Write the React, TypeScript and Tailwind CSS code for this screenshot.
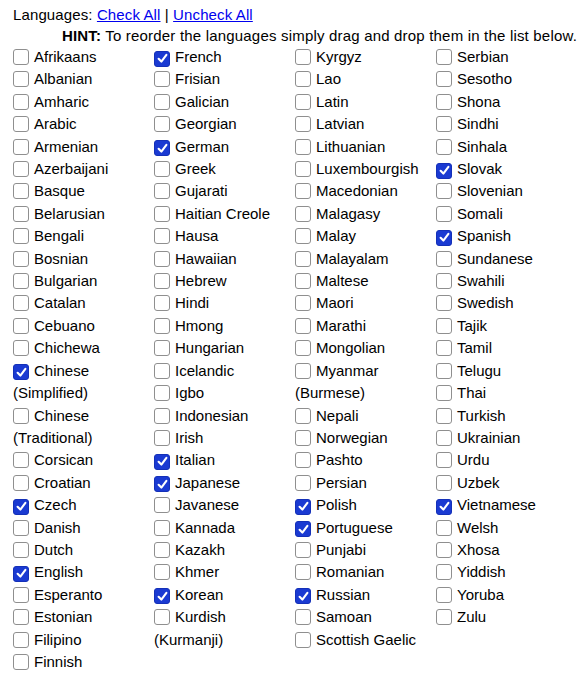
import React from 'react';

type Lang = { name: string; on?: boolean };

const columns: Lang[][] = [
  [
    { name: 'Afrikaans' }, { name: 'Albanian' }, { name: 'Amharic' }, { name: 'Arabic' },
    { name: 'Armenian' }, { name: 'Azerbaijani' }, { name: 'Basque' }, { name: 'Belarusian' },
    { name: 'Bengali' }, { name: 'Bosnian' }, { name: 'Bulgarian' }, { name: 'Catalan' },
    { name: 'Cebuano' }, { name: 'Chichewa' }, { name: 'Chinese (Simplified)', on: true },
    { name: 'Chinese (Traditional)' }, { name: 'Corsican' }, { name: 'Croatian' },
    { name: 'Czech', on: true }, { name: 'Danish' }, { name: 'Dutch' }, { name: 'English', on: true },
    { name: 'Esperanto' }, { name: 'Estonian' }, { name: 'Filipino' }, { name: 'Finnish' },
  ],
  [
    { name: 'French', on: true }, { name: 'Frisian' }, { name: 'Galician' }, { name: 'Georgian' },
    { name: 'German', on: true }, { name: 'Greek' }, { name: 'Gujarati' }, { name: 'Haitian Creole' },
    { name: 'Hausa' }, { name: 'Hawaiian' }, { name: 'Hebrew' }, { name: 'Hindi' },
    { name: 'Hmong' }, { name: 'Hungarian' }, { name: 'Icelandic' }, { name: 'Igbo' },
    { name: 'Indonesian' }, { name: 'Irish' }, { name: 'Italian', on: true }, { name: 'Japanese', on: true },
    { name: 'Javanese' }, { name: 'Kannada' }, { name: 'Kazakh' }, { name: 'Khmer' },
    { name: 'Korean', on: true }, { name: 'Kurdish (Kurmanji)' },
  ],
  [
    { name: 'Kyrgyz' }, { name: 'Lao' }, { name: 'Latin' }, { name: 'Latvian' },
    { name: 'Lithuanian' }, { name: 'Luxembourgish' }, { name: 'Macedonian' }, { name: 'Malagasy' },
    { name: 'Malay' }, { name: 'Malayalam' }, { name: 'Maltese' }, { name: 'Maori' },
    { name: 'Marathi' }, { name: 'Mongolian' }, { name: 'Myanmar (Burmese)' }, { name: 'Nepali' },
    { name: 'Norwegian' }, { name: 'Pashto' }, { name: 'Persian' }, { name: 'Polish', on: true },
    { name: 'Portuguese', on: true }, { name: 'Punjabi' }, { name: 'Romanian' }, { name: 'Russian', on: true },
    { name: 'Samoan' }, { name: 'Scottish Gaelic' },
  ],
  [
    { name: 'Serbian' }, { name: 'Sesotho' }, { name: 'Shona' }, { name: 'Sindhi' },
    { name: 'Sinhala' }, { name: 'Slovak', on: true }, { name: 'Slovenian' }, { name: 'Somali' },
    { name: 'Spanish', on: true }, { name: 'Sundanese' }, { name: 'Swahili' }, { name: 'Swedish' },
    { name: 'Tajik' }, { name: 'Tamil' }, { name: 'Telugu' }, { name: 'Thai' },
    { name: 'Turkish' }, { name: 'Ukrainian' }, { name: 'Urdu' }, { name: 'Uzbek' },
    { name: 'Vietnamese', on: true }, { name: 'Welsh' }, { name: 'Xhosa' }, { name: 'Yiddish' },
    { name: 'Yoruba' }, { name: 'Zulu' },
  ],
];

const Box: React.FC<{ on?: boolean }> = ({ on }) =>
  on ? (
    <span className="inline-flex items-center justify-center w-4 h-4 mr-[5px] align-[-3px] rounded-[3px] bg-[#1a3ad2] border border-[#1430b8]">
      <svg viewBox="0 0 16 16" className="w-[13px] h-[13px]">
        <path d="M3.2 8.4 L6.6 11.8 L12.8 3.6" fill="none" stroke="white" strokeWidth="2.6" strokeLinecap="round" strokeLinejoin="round" />
      </svg>
    </span>
  ) : (
    <span className="inline-block w-4 h-4 mr-[5px] align-[-3px] rounded-[3px] bg-white border border-[#8f8f8f]" />
  );

export default function App() {
  return (
    <div
      className="w-[585px] h-[683px] bg-white text-black text-[15px] pl-[13px] pr-[8px] pt-[4px]"
      style={{ fontFamily: '"Liberation Sans", Arial, sans-serif' }}
    >
      <div className="leading-[21px] tracking-[0.12px]">
        Languages:{' '}
        <a href="#" className="text-[#0000ee] underline">Check All</a>
        {' | '}
        <a href="#" className="text-[#0000ee] underline">Uncheck All</a>
      </div>
      <div className="leading-[21px] text-right tracking-[0.19px]">
        <b>HINT:</b> To reorder the languages simply drag and drop them in the list below.
      </div>
      <div className="grid grid-cols-4">
        {columns.map((col, i) => (
          <div key={i}>
            {col.map((l) => (
              <div key={l.name} className="leading-[22.4px] pr-1">
                <Box on={l.on} />
                {l.name}
              </div>
            ))}
          </div>
        ))}
      </div>
    </div>
  );
}
